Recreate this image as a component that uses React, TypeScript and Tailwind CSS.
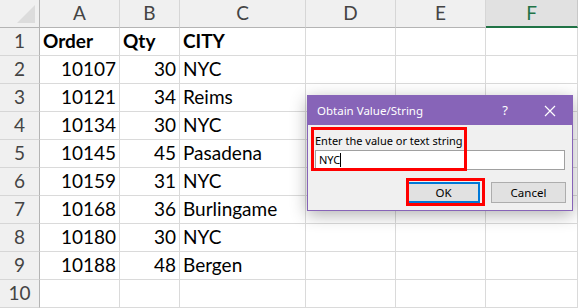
import React from "react";

const cols = [
  { key: "A", w: "w-[80px]" },
  { key: "B", w: "w-[60px]" },
  { key: "C", w: "w-[126px]" },
  { key: "D", w: "w-[90px]" },
  { key: "E", w: "w-[90px]" },
  { key: "F", w: "w-[92px]" },
];

const rows: [string, string, string][] = [
  ["Order", "Qty", "CITY"],
  ["10107", "30", "NYC"],
  ["10121", "34", "Reims"],
  ["10134", "30", "NYC"],
  ["10145", "45", "Pasadena"],
  ["10159", "31", "NYC"],
  ["10168", "36", "Burlingame"],
  ["10180", "30", "NYC"],
  ["10188", "48", "Bergen"],
  ["", "", ""],
];

const cellFont = { fontFamily: "Lato, 'Liberation Sans', sans-serif" };
const uiFont = { fontFamily: "'Noto Sans', 'Liberation Sans', sans-serif" };

function HeaderRow() {
  return (
    <div className="flex h-[28px]">
      <div className="relative w-[40px] h-full bg-[#f0f0f0] border-r border-b border-[#b4b4b4]">
        <div className="absolute right-[4px] bottom-[4px] w-0 h-0 border-l-[18px] border-l-transparent border-b-[18px] border-b-[#dcdcdc]" />
      </div>
      {cols.map((c) => {
        const sel = c.key === "F";
        return (
          <div
            key={c.key}
            className={`${c.w} h-full flex items-center justify-center text-[19px] border-r ${
              sel
                ? "bg-[#e1e1e1] text-[#217346] border-b-2 border-b-[#217346] border-r-[#c8c8c8]"
                : "bg-[#f0f0f0] text-[#444] border-b border-b-[#b4b4b4] border-r-[#d6d6d6]"
            }`}
          >
            {c.key}
          </div>
        );
      })}
    </div>
  );
}

export default function App() {
  return (
    <div className="relative w-[578px] h-[308px] overflow-hidden bg-white" style={cellFont}>
      <HeaderRow />
      {rows.map((r, i) => (
        <div key={i} className="flex h-[28px]">
          <div className="w-[40px] h-full flex items-center justify-center bg-[#f0f0f0] text-[#444] text-[19px] border-r border-b border-r-[#b4b4b4] border-b-[#d6d6d6]">
            {i + 1}
          </div>
          {cols.map((c, j) => {
            const v = j < 3 ? r[j] : "";
            const num = i > 0 && j < 2;
            return (
              <div
                key={c.key}
                className={`${c.w} h-full flex items-center px-[3px] text-[19px] text-black border-r border-b border-[#dadada] whitespace-nowrap ${
                  num ? "justify-end" : "justify-start"
                } ${i === 0 ? "font-bold" : ""}`}
              >
                {v}
              </div>
            );
          })}
        </div>
      ))}

      {/* dialog */}
      <div
        className="absolute left-[307px] top-[95px] w-[266px] h-[116px] bg-[#f0f0f0] border border-[#8764b8] shadow-[0_4px_16px_rgba(0,0,0,0.3)] flex flex-col"
        style={uiFont}
      >
        <div className="h-[29px] bg-[#8764b8] flex items-center text-white text-[11.5px] pl-[9px]">
          <span className="flex-1">Obtain Value/String</span>
          <span className="w-[20px] text-center mr-[29px] text-[13px]">?</span>
          <svg width="12" height="12" viewBox="0 0 12 12" className="mr-[16px]">
            <path d="M1 1L11 11M11 1L1 11" stroke="white" strokeWidth="1.2" />
          </svg>
        </div>
        <div className="flex flex-col px-[7px] pt-[8px]">
          <div className="text-[11px] text-black leading-[16px]">Enter the value or text string</div>
          <div className="mt-[1px] h-[20px] bg-white border border-[#a0a0a0] flex items-center pl-[3px] text-[11px] text-black">
            NYC<span className="w-px h-[14px] bg-black" />
          </div>
          <div className="flex justify-end gap-[11px] mt-[12px] -mr-[1px]">
            <button className="w-[73px] h-[21px] bg-[#e1e1e1] border-2 border-[#0078d7] text-[11.5px] text-black flex items-center justify-center">
              OK
            </button>
            <button className="w-[75px] h-[21px] bg-[#e1e1e1] border border-[#adadad] text-[11.5px] text-black flex items-center justify-center">
              Cancel
            </button>
          </div>
        </div>
      </div>

      {/* red annotation boxes */}
      <div className="absolute left-[311px] top-[127px] w-[156px] h-[44px] border-[3px] border-[#ff0000]" />
      <div className="absolute left-[406px] top-[178px] w-[79px] h-[28px] border-[3px] border-[#ff0000]" />
    </div>
  );
}
